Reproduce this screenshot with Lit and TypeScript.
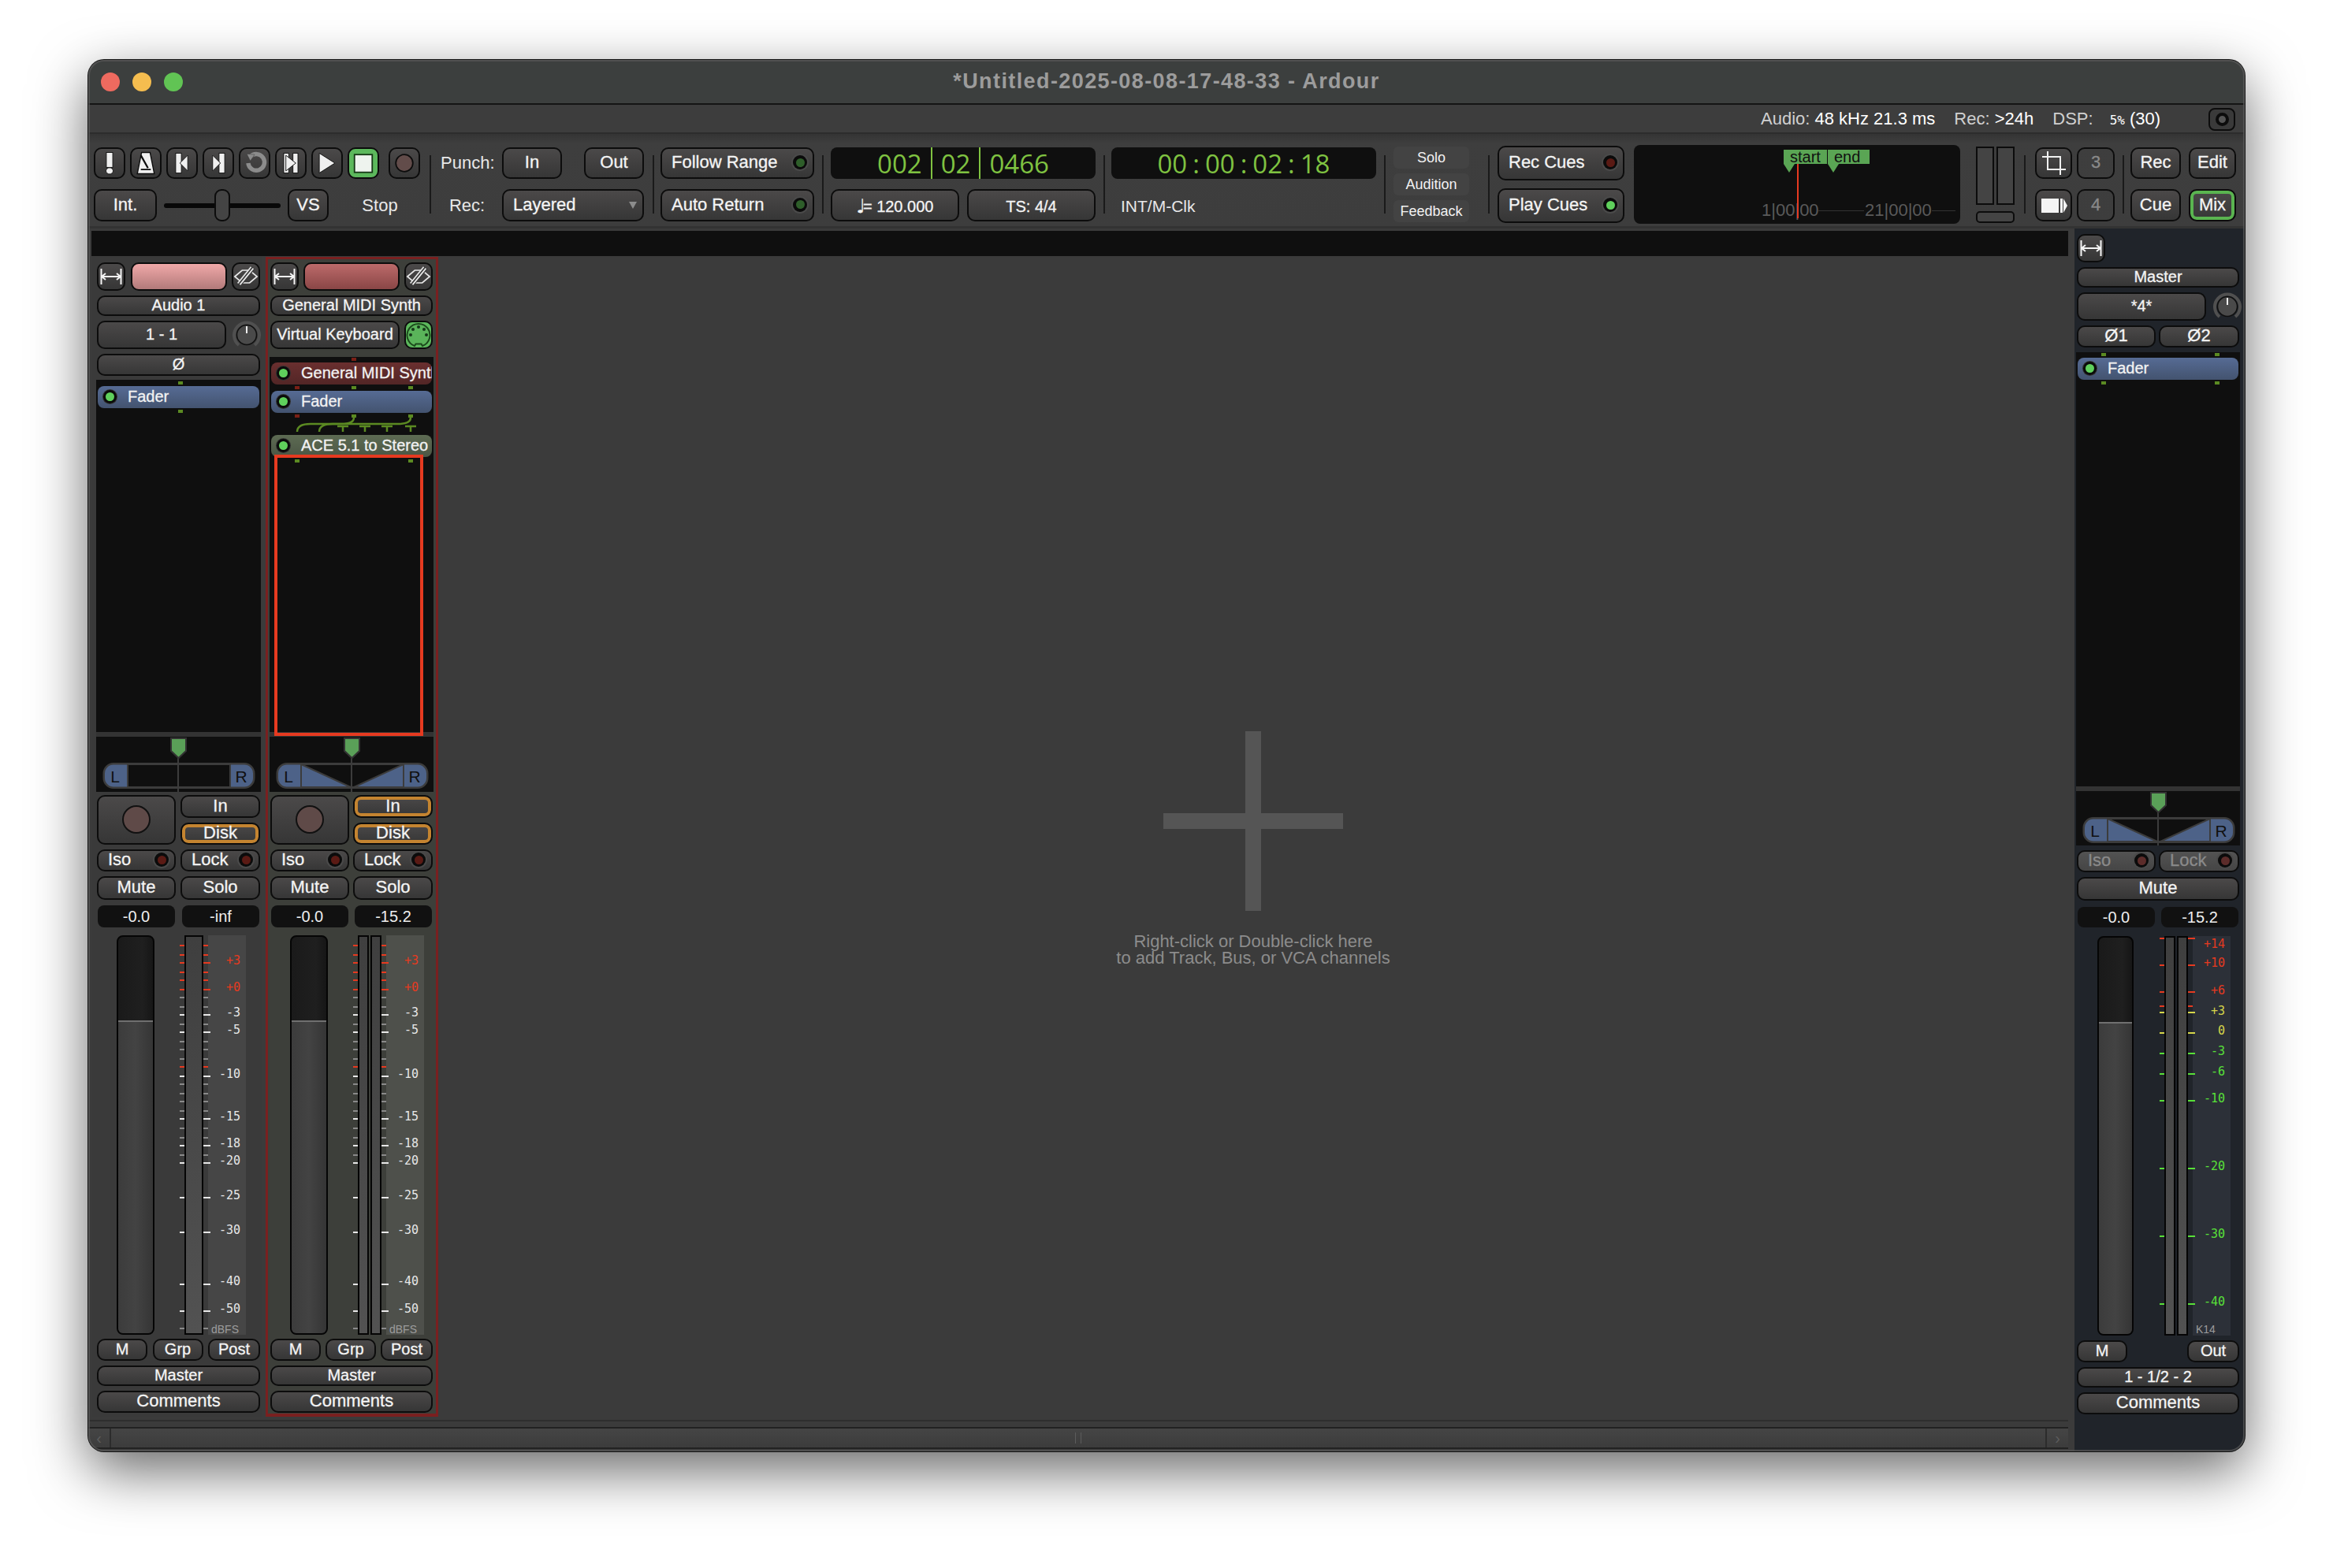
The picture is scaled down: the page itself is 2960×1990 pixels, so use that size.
import { LitElement, html, css, svg } from "lit";
import { customElement } from "lit/decorators.js";

type Tick = [number, "s" | "l", string];
type Mark = [number, string, string];

const RED = "#e63a20";
const GRY = "#8a8a8a";
const WHT = "#e8e8e8";
const YEL = "#d6d64a";
const GRN = "#58e038";

// y values below are offsets from the top of the meter
const dbTicks: Tick[] = (
  [
    [1199, "s", RED], [1211, "s", RED], [1221, "l", RED], [1233, "s", RED], [1243, "s", RED], [1255, "l", RED],
    [1265, "s", GRY], [1277, "s", GRY], [1287, "l", WHT], [1299, "s", GRY], [1309, "l", WHT], [1321, "s", GRY],
    [1331, "s", GRY], [1343, "s", GRY], [1353, "s", RED], [1365, "l", WHT], [1375, "s", GRY], [1387, "s", GRY],
    [1397, "s", GRY], [1409, "s", GRY], [1419, "l", WHT], [1431, "s", GRY], [1443, "s", GRY], [1453, "l", WHT],
    [1465, "s", GRY], [1475, "l", WHT], [1519, "l", WHT], [1563, "l", WHT], [1629, "l", WHT], [1663, "l", WHT],
    [1685, "s", GRY],
  ] as Tick[]
).map(([y, k, c]) => [y - 1186, k, c] as Tick);

const dbMarks: Mark[] = (
  [
    [1218, "+3", RED], [1252, "+0", RED], [1284, "-3", WHT], [1306, "-5", WHT], [1362, "-10", WHT], [1416, "-15", WHT],
    [1450, "-18", WHT], [1472, "-20", WHT], [1516, "-25", WHT], [1560, "-30", WHT], [1625, "-40", WHT], [1660, "-50", WHT],
  ] as Mark[]
).map(([y, t, c]) => [y - 1186, t, c] as Mark);

const kTicks: Tick[] = (
  [
    [1191, "l", RED], [1225, "l", RED], [1259, "l", RED], [1277, "s", RED], [1285, "l", YEL], [1311, "l", YEL],
    [1337, "l", GRN], [1363, "l", GRN], [1397, "l", GRN], [1483, "l", GRN], [1569, "l", GRN], [1655, "l", GRN],
  ] as Tick[]
).map(([y, k, c]) => [y - 1188, k, c] as Tick);

const kMarks: Mark[] = (
  [
    [1198, "+14", RED], [1222, "+10", RED], [1257, "+6", RED], [1283, "+3", YEL], [1308, "0", YEL], [1334, "-3", GRN],
    [1360, "-6", GRN], [1394, "-10", GRN], [1480, "-20", GRN], [1566, "-30", GRN], [1652, "-40", GRN],
  ] as Mark[]
).map(([y, t, c]) => [y - 1188, t, c] as Mark);

const widthIcon = html`<svg width="32" height="32" viewBox="0 0 32 32" fill="none" stroke="#f4f4f4" stroke-width="2">
  <path d="M3.500 6v20M28.500 6v20M4 16h24M9 12l-5 4 5 4M23 12l5 4-5 4" />
</svg>`;

const eyeIcon = html`<svg width="34" height="34" viewBox="0 0 34 34" fill="none" stroke="#e8e8e8" stroke-width="1.800">
  <path d="M2 17l10-8.500h10l10 8.500-10 8.500H12z" />
  <path d="M7 29L27 5" stroke="#3a3a3a" stroke-width="6" />
  <path d="M9 28L27 6M6 26L24 4" />
</svg>`;

const midiIcon = html`<svg width="32" height="32" viewBox="0 0 32 32">
  <path d="M11 30a14.500 14.500 0 1 1 10 0l-1.500-2.500h-7z" fill="#5ab45a" stroke="#1c4a1c" stroke-width="2" />
  <g fill="#17381a">
    <circle cx="16" cy="6" r="2" /><circle cx="9" cy="9" r="2" /><circle cx="23" cy="9" r="2" />
    <circle cx="6" cy="16" r="2" /><circle cx="26" cy="16" r="2" />
  </g>
</svg>`;

const knob = html`<svg width="36" height="36" viewBox="0 0 36 36">
  <path d="M8 31a16 16 0 1 1 20 0" fill="none" stroke="#505050" stroke-width="4" />
  <circle cx="18" cy="18" r="12.500" fill="#4a4a4a" stroke="#0f0f0f" stroke-width="1.500" />
  <path d="M18 7v9" stroke="#eee" stroke-width="2" />
</svg>`;

const T = { f: "#f0f0f0", s: "#0c0c0c" };
const tIcons = {
  panic: svg`<rect x="15.500" y="5" width="9" height="21" fill=${T.f} stroke=${T.s} /><ellipse cx="20" cy="31" rx="5" ry="4.500" fill=${T.f} stroke=${T.s} />`,
  metro: svg`<path d="M14 5h12l6 30H8z" fill=${T.f} stroke=${T.s} stroke-width="1.500" /><path d="M13 29h14" stroke=${T.s} stroke-width="2" /><path d="M13 9l10 18" stroke=${T.s} stroke-width="2.500" />`,
  start: svg`<rect x="11" y="6" width="8" height="28" fill=${T.f} stroke=${T.s} /><path d="M28 9L17 20l11 11z" fill=${T.f} stroke=${T.s} />`,
  end: svg`<rect x="21" y="6" width="8" height="28" fill=${T.f} stroke=${T.s} /><path d="M12 9l11 11-11 11z" fill=${T.f} stroke=${T.s} />`,
  loop: svg`<path d="M14 11a11.500 11.500 0 1 1-3 9" fill="none" stroke="#8c8c8c" stroke-width="6" /><path d="M9 7l11 1-6 9z" fill="#8c8c8c" stroke="#333" stroke-width=".5" />`,
  range: svg`<rect x="10" y="6" width="7" height="28" fill=${T.f} stroke=${T.s} /><rect x="23" y="6" width="7" height="28" fill=${T.f} stroke=${T.s} /><path d="M13 9l14 11-14 11z" fill=${T.f} stroke=${T.s} />`,
  play: svg`<path d="M9 6l22 14L9 34z" fill=${T.f} stroke=${T.s} />`,
  stop: svg`<rect x="7.500" y="8" width="25" height="25" fill="#eef3ee" stroke="#163816" stroke-width="2" />`,
  rec: svg`<circle cx="20" cy="20" r="12" fill="#624c4a" stroke=${T.s} stroke-width="2" />`,
};
const tIcon = (name: keyof typeof tIcons) =>
  html`<svg width="36" height="36" viewBox="0 0 40 40">${tIcons[name]}</svg>`;

const cropIcon = html`<svg width="34" height="34" viewBox="0 0 34 34" fill="none" stroke="#f0f0f0" stroke-width="2">
  <path d="M9 2v23h23M2 9h23v23" />
</svg>`;
const cueIcon = html`<svg width="36" height="24" viewBox="0 0 36 24">
  <rect x="2" y="3" width="22" height="18" fill="#f4f4f4" /><rect x="26" y="3" width="3" height="18" fill="#f4f4f4" />
  <path d="M30 3l5 9-5 9z" fill="#f4f4f4" />
</svg>`;

const led = (cls: string) => html`<span class="led"><i class=${cls}></i></span>`;

@customElement("app-root")
export class AppRoot extends LitElement {
  static styles = css`
    :host {
      display: block;
      width: 2960px;
      height: 1990px;
      background: #fff;
      font-family: "Liberation Sans", Arial, sans-serif;
      color: #f2f2f2;
      overflow: hidden;
    }
    * {
      box-sizing: border-box;
    }
    svg {
      display: block;
    }
    .page {
      padding: 76px 0 0 112px;
    }
    .window {
      position: relative;
      width: 2736px;
      height: 1766px;
      border-radius: 20px;
      background: #3c3c3c;
      overflow: hidden;
      box-shadow: 0 24px 70px rgba(0, 0, 0, 0.6), 0 0 0 1px #1d1d1d;
    }
    .window::after {
      content: "";
      position: absolute;
      inset: 0;
      border: 2px solid #5a5a5a;
      border-radius: 20px;
      pointer-events: none;
      opacity: 0.7;
    }

    /* title + info */
    .titlebar {
      height: 57px;
      background: #3c3f3e;
      border-bottom: 2px solid #141414;
      display: flex;
      align-items: center;
      justify-content: center;
      position: relative;
    }
    .title {
      font-size: 27px;
      font-weight: 700;
      letter-spacing: 1.4px;
      color: #9c9c9c;
    }
    .lights {
      position: absolute;
      left: 16px;
      top: 16px;
      display: flex;
      gap: 16px;
    }
    .lights i {
      width: 24px;
      height: 24px;
      border-radius: 50%;
    }
    .infobar {
      height: 37px;
      background: #3d3d3d;
      border-bottom: 2px solid #2c2c2c;
      display: flex;
      align-items: center;
      font-size: 22px;
      color: #d0d0d0;
      padding-left: 2122px;
    }
    .infobar b {
      font-weight: 400;
      color: #fff;
    }
    .info-rec {
      margin-left: 24px;
    }
    .info-dsp {
      margin-left: 24px;
    }
    .info-val {
      margin-left: 21px;
      color: #fff;
    }
    .info-val small {
      font-family: "DejaVu Sans Mono", monospace;
      font-size: 16px;
    }
    .info-btn {
      position: absolute;
      left: 2690px;
      top: 61px;
      width: 34px;
      height: 29px;
      border: 2px solid #0c0c0c;
      border-radius: 8px;
      background: #3a3a3a;
      display: flex;
      align-items: center;
      justify-content: center;
    }
    .info-btn i {
      width: 17px;
      height: 17px;
      border-radius: 50%;
      border: 4px solid #0c0c0c;
      background: #555;
    }

    /* toolbar */
    .toolbar {
      height: 120px;
      background: linear-gradient(#343434, #3e3e3e 12px, #3d3d3d);
      display: flex;
      align-items: flex-start;
      padding: 17px 0 0 7px;
      border-bottom: 3px solid #333;
    }
    .group {
      display: flex;
      flex-direction: column;
      gap: 13px;
      flex: none;
    }
    .row {
      display: flex;
      height: 40px;
      align-items: center;
    }
    .row.r2 {
      height: 41px;
    }
    .sep {
      width: 2px;
      height: 74px;
      margin-top: 10px;
      background: #1a1a1a;
      flex: none;
    }
    .btn {
      display: flex;
      align-items: center;
      justify-content: center;
      flex: none;
      height: 100%;
      border: 2px solid #0c0c0c;
      border-radius: 10px;
      background: linear-gradient(#4b4949, #363636);
      color: #f4f4f4;
      font-size: 22px;
      line-height: 1;
      white-space: nowrap;
      padding-bottom: 2px;
      -webkit-text-stroke: 0.3px currentColor;
    }
    .btn.small {
      font-size: 20px;
    }
    .btn.left {
      justify-content: space-between;
      padding: 0 7px 2px 12px;
    }
    .btn.low {
      padding: 3px 0 0;
    }
    .btn.ring-o {
      box-shadow: inset 0 0 0 4px #c48430;
    }
    .btn.ring-g {
      box-shadow: inset 0 0 0 4px #5ab450;
    }
    .btn.go {
      background: #5cb85c;
    }
    .btn.dim {
      color: #8a8a8a;
      background: linear-gradient(#535353, #454545);
    }
    .tbtn {
      width: 40px;
      margin-right: 6px;
      padding: 0;
    }
    .tbtn.last {
      margin: 0 0 0 6px;
    }
    .led {
      flex: none;
      width: 18px;
      height: 18px;
      border-radius: 50%;
      background: #0b0b0b;
      box-shadow: 0 0 0 2px #4a4a4a;
      display: flex;
      align-items: center;
      justify-content: center;
    }
    .led i {
      width: 11px;
      height: 11px;
      border-radius: 50%;
    }
    .led .on {
      background: #5fd05c;
    }
    .led .dimg {
      background: #2e5e2a;
    }
    .led .off {
      background: #5a1a14;
    }
    .led .off2 {
      background: #5c2c2a;
    }
    .slider {
      position: relative;
      width: 148px;
      height: 41px;
      margin: 0 9px;
      display: flex;
      align-items: center;
    }
    .slider .track {
      width: 100%;
      height: 6px;
      background: #080808;
      border-radius: 3px;
    }
    .slider .thumb {
      position: absolute;
      left: 64px;
      top: 0;
      width: 20px;
      height: 41px;
      border: 2px solid #0c0c0c;
      border-radius: 9px;
      background: #444;
    }
    .plain {
      font-size: 22px;
      color: #e8e8e8;
      text-align: center;
      flex: none;
    }
    .clock {
      width: 336px;
      height: 40px;
      border-radius: 8px;
      background: #0f0f0f;
      color: #7fc241;
      font-family: "Open Sans", sans-serif;
      font-size: 33px;
      display: flex;
      align-items: center;
      justify-content: center;
      line-height: 1;
    }
    .clock .bar {
      width: 2px;
      height: 40px;
      background: #7fc241;
      margin: 0 11px;
    }
    .clock .colon {
      margin: 0 7px;
    }
    .note {
      font-family: "DejaVu Sans", sans-serif;
      font-size: 24px;
      margin-right: -3px;
    }
    .flat {
      width: 96px;
      height: 28px;
      margin-bottom: 6px;
      border-radius: 6px;
      background: #434343;
      font-size: 18px;
      display: flex;
      align-items: center;
      justify-content: center;
    }
    .timeline {
      position: relative;
      width: 414px;
      height: 100px;
      margin: -3px 0 0 12px;
      border-radius: 8px;
      background: #0f0f0f;
      flex: none;
      overflow: hidden;
    }
    .timeline span {
      position: absolute;
    }
    .flag {
      top: 6px;
      height: 18px;
      background: #5aa554;
      color: #101010;
      font-size: 20px;
      line-height: 18px;
      padding-left: 8px;
    }
    .pole {
      top: 24px;
      width: 0;
      height: 0;
      border-left: 7px solid transparent;
      border-right: 7px solid transparent;
      border-top: 11px solid #5aa554;
    }
    .playhead {
      left: 207px;
      top: 24px;
      width: 2px;
      height: 69px;
      background: #e63a20;
    }
    .tl-text {
      top: 71px;
      color: #5a5a5a;
      font-size: 22px;
      line-height: 24px;
    }
    .tl-line {
      top: 83px;
      height: 1px;
      background: #333;
    }
    .meters {
      width: 49px;
      margin: -1px 0 0 20px;
      flex: none;
    }
    .mtr-row {
      display: flex;
      justify-content: space-between;
    }
    .mtr-row i {
      width: 23px;
      height: 74px;
      border: 2px solid #0c0c0c;
      background: #444;
    }
    .mtr-btn {
      height: 15px;
      margin-top: 8px;
      border: 2px solid #0c0c0c;
      border-radius: 5px;
      background: #444;
    }

    /* body */
    .body {
      display: flex;
      height: 1552px;
    }
    .main {
      width: 2520px;
      flex: none;
      background: #3b3b3b;
    }
    .blackbar {
      height: 32px;
      margin: 3px 8px 1px 4px;
      background: #0f0f0f;
    }
    .mixer {
      height: 1472px;
      display: flex;
      padding-left: 5px;
    }
    .empty {
      width: 2068px;
      flex: none;
      display: flex;
      flex-direction: column;
      align-items: center;
      padding-top: 602px;
      color: #8c8c8c;
      font-size: 22px;
      line-height: 21px;
      text-align: center;
    }
    .empty svg {
      margin-bottom: 28px;
    }
    .footer {
      height: 44px;
      padding-top: 13px;
      position: relative;
    }
    .footer::before {
      content: "";
      position: absolute;
      left: 0;
      right: 8px;
      top: 4px;
      height: 2px;
      background: #2e2e2e;
    }
    .scroll {
      height: 28px;
      margin-right: 8px;
      border-top: 2px solid #222;
      border-bottom: 2px solid #222;
      background: linear-gradient(#454545, #3c3c3c);
      display: flex;
      justify-content: space-between;
      align-items: center;
      color: #5c5c5c;
      font-size: 20px;
    }
    .scroll span {
      width: 29px;
      height: 100%;
      display: flex;
      align-items: center;
      justify-content: center;
    }
    .scroll span:first-child {
      border-right: 2px solid #2c2c2c;
    }
    .scroll span:last-child {
      border-left: 2px solid #2c2c2c;
    }
    .grip {
      width: 8px;
      height: 14px;
      border-left: 1px solid #5c5c5c;
      border-right: 1px solid #5c5c5c;
    }

    /* strips */
    .strip {
      width: 215px;
      flex: none;
      height: 100%;
      padding: 7px 2px 5px 6px;
      background: #3a3a3a;
      display: flex;
      flex-direction: column;
      font-size: 20px;
    }
    .strip.sel {
      width: 219px;
      margin-left: 5px;
      padding: 4px 4px 1px 3px;
      background: #3d3f3a;
      border: 3px solid #7a2020;
      border-bottom-width: 4px;
    }
    .strip.master {
      width: 216px;
      height: 1552px;
      background: #20242a;
      padding: 7px 7px 47px 3px;
    }
    .line {
      display: flex;
      justify-content: space-between;
      flex: none;
    }
    .h36 {
      height: 36px;
    }
    .h26 {
      height: 26px;
    }
    .h28 {
      height: 28px;
    }
    .h30 {
      height: 30px;
    }
    .rbtn {
      width: 36px;
      padding: 0;
    }
    .colour {
      width: 122px;
      height: 36px;
      border: 2px solid #0c0c0c;
      border-radius: 10px;
    }
    .colour.pink {
      background: linear-gradient(#f0a8a8, #b27a7a);
    }
    .colour.red {
      background: linear-gradient(#bc6a6a, #8a4646);
    }
    .box {
      flex: 1;
      min-height: 0;
      margin-left: -1px;
      margin-right: -1px;
      background: #0f0f0f;
      display: flex;
      flex-direction: column;
      position: relative;
    }
    .pips {
      position: relative;
      height: 4px;
      flex: none;
    }
    .pips i {
      position: absolute;
      top: 0;
      width: 6px;
      height: 4px;
      background: #5b8a22;
    }
    .pips i.r {
      background: #7a1f16;
    }
    .proc {
      height: 28px;
      margin: 2px;
      border-radius: 8px;
      display: flex;
      align-items: center;
      padding: 0 0 2px 7px;
      gap: 14px;
      font-size: 20px;
      color: #f2f2f2;
      white-space: nowrap;
      overflow: hidden;
      flex: none;
      -webkit-text-stroke: 0.3px currentColor;
    }
    .proc .led {
      width: 17px;
      height: 17px;
      box-shadow: 0 0 0 1px #333;
    }
    .proc.amp {
      background: linear-gradient(#566b94, #43536f);
    }
    .proc.inst {
      background: linear-gradient(#6a2f2f, #522626);
    }
    .proc.plug {
      background: linear-gradient(#5d6b53, #4b5644);
    }
    .selbox {
      position: absolute;
      left: 6px;
      top: 124px;
      width: 189px;
      bottom: -5px;
      border: 4px solid #e63a20;
      z-index: 1;
    }
    .divider {
      height: 6px;
      flex: none;
      background: #333;
      margin: 0 -1px;
    }
    .panner {
      margin: 0 -1px;
      height: 70px;
      flex: none;
      background: #0f0f0f;
      overflow: hidden;
    }
    .master .panner {
      height: 69px;
    }
    .half {
      width: 100px;
    }
    .half.r {
      width: 101px;
    }
    .stack {
      width: 101px;
      display: flex;
      flex-direction: column;
      gap: 6px;
    }
    .gain {
      width: 98px;
      height: 100%;
      border-radius: 8px;
      background: #111;
      color: #eee;
      display: flex;
      align-items: center;
      justify-content: center;
      margin: 0 1px;
    }
    .recbig {
      width: 100px;
      height: 63px;
    }
    .recbig i {
      width: 36px;
      height: 36px;
      border-radius: 50%;
      background: #5f4a48;
      border: 2px solid #111;
    }
    .fader-row {
      height: 507px;
      flex: none;
      display: flex;
      padding-left: 25px;
    }
    .gfader {
      width: 48px;
      height: 100%;
      border: 2px solid #050505;
      border-radius: 8px;
      background: linear-gradient(90deg, #1a1a1a, #1f1f1f 70%, #161616);
      overflow: hidden;
      padding-top: 106px;
      flex: none;
    }
    .gfader i {
      display: block;
      height: 100%;
      border-top: 2px solid #707070;
      background: linear-gradient(90deg, #3c3c3c, #434343 50%, #353535);
    }
    .meter {
      display: flex;
      height: 100%;
      margin-left: 32px;
      flex: none;
    }
    .ticks {
      width: 6px;
      position: relative;
      flex: none;
    }
    .ticks i {
      position: absolute;
      left: 0;
      height: 2px;
      width: 6px;
      z-index: 1;
    }
    .ticks.rt i.l {
      width: 9px;
    }
    .mbar {
      height: 100%;
      border: 2px solid #050505;
      background: linear-gradient(#3f3f3f, #525252);
      flex: none;
    }
    .mbar.one {
      width: 24px;
    }
    .mbar.two {
      width: 14px;
    }
    .mbar.two + .mbar.two {
      margin-left: 2px;
    }
    .scale {
      width: 48px;
      position: relative;
      background: #464646;
      flex: none;
    }
    .sel .scale {
      background: #4e504b;
    }
    .master .scale {
      background: #2c3038;
    }
    .scale span {
      position: absolute;
      right: 7px;
      transform: translateY(-50%);
      font-family: "DejaVu Sans Mono", monospace;
      font-size: 15px;
      line-height: 1;
    }
    .scale .unit {
      left: 4px;
      right: auto;
      font-family: "Liberation Sans", sans-serif;
      font-size: 14px;
      color: #9c9c9c;
    }
    .master .meter {
      margin-left: 33px;
    }
    .master .fader-row {
      padding-left: 26px;
    }
    .master .gfader {
      width: 46px;
      padding-top: 107px;
    }
    .mt4 {
      margin-top: 4px;
    }
    .mt5 {
      margin-top: 5px;
    }
    .mt6 {
      margin-top: 6px;
    }
    .mt7 {
      margin-top: 7px;
    }
    .mt10 {
      margin-top: 10px;
    }
  `;

  private ticks(list: Tick[], right: boolean) {
    return html`<div class="ticks ${right ? "rt" : ""}">
      ${list.map(([y, k, c]) => html`<i class=${k} style="top:${y - 1}px;background:${c}"></i>`)}
    </div>`;
  }

  private meter(ticks: Tick[], marks: Mark[], bars: number, unit: string, unitTop: number) {
    const cls = bars === 1 ? "one" : "two";
    return html`<div class="meter">
      ${this.ticks(ticks, false)}
      ${Array.from({ length: bars }, () => html`<div class="mbar ${cls}"></div>`)}
      ${this.ticks(ticks, true)}
      <div class="scale">
        ${marks.map(([y, t, c]) => html`<span style="top:${y}px;color:${c}">${t}</span>`)}
        <span class="unit" style="top:${unitTop}px">${unit}</span>
      </div>
    </div>`;
  }

  private panner(wedges: boolean) {
    return html`<div class="panner">
      <svg width="208" height="70" viewBox="0 0 208 70">
        <rect x="10" y="34.500" width="190" height="30" rx="12" fill="#0f0f0f" stroke="#3c3c3c" stroke-width="3" />
        <path d="M11 46.500a11 11 0 0 1 11-11h18v28H22a11 11 0 0 1-11-11zM170 35.500h18a11 11 0 0 1 11 11v6a11 11 0 0 1-11 11h-18z" fill="#4d6288" />
        ${wedges
          ? svg`<path d="M40 35l63 29H40zM170 35l-63 29h63z" fill="#4d6288" stroke="#3c3c3c" stroke-width="2" />`
          : svg`<path d="M40 34v31M170 34v31" stroke="#3c3c3c" stroke-width="2" />`}
        <path d="M104 26v44" stroke="#3c3c3c" stroke-width="2" />
        <path d="M95 2h19v16l-9.500 9-9.500-9z" fill="#5aa058" stroke="#333" stroke-width="2" />
        <text x="24" y="58" text-anchor="middle" font-size="21" fill="#101010">L</text>
        <text x="184" y="58" text-anchor="middle" font-size="21" fill="#101010">R</text>
      </svg>
    </div>`;
  }

  private pips(list: [number, string?][], mt = 0) {
    return html`<div class="pips" style="margin-top:${mt}px">
      ${list.map(([x, c]) => html`<i class=${c ?? ""} style="left:${x - 3}px"></i>`)}
    </div>`;
  }

  private proc(cls: string, name: string) {
    return html`<div class="proc ${cls}">${led("on")}<span>${name}</span></div>`;
  }

  private stripFoot(second: string, post: string) {
    return html`
      <div class="line h28 mt5">
        <div class="btn small" style="width:64px">M</div>
        <div class="btn small" style="width:64px">Grp</div>
        <div class="btn small" style="width:66px">${post}</div>
      </div>
      <div class="line h26 mt6"><div class="btn small" style="width:100%">${second}</div></div>
      <div class="line h28 mt6"><div class="btn" style="width:100%">Comments</div></div>
    `;
  }

  private stripControls(first: string, inRing: boolean) {
    return html`
      <div class="line mt4" style="height:63px">
        <div class="btn recbig"><i></i></div>
        <div class="stack">
          <div class="btn ${inRing ? "ring-o" : ""}" style="height:29px;width:100%">In</div>
          <div class="btn ring-o" style="height:28px;width:100%">Disk</div>
        </div>
      </div>
      <div class="line h28 mt6">
        <div class="btn left half">Iso${led("off")}</div>
        <div class="btn left half r">Lock${led("off")}</div>
      </div>
      <div class="line h30 mt6">
        <div class="btn half">Mute</div>
        <div class="btn half r">Solo</div>
      </div>
      <div class="line h28 mt7">
        <div class="gain">-0.0</div>
        <div class="gain">${first}</div>
      </div>
    `;
  }

  private audioStrip() {
    return html`<div class="strip">
      <div class="line h36">
        <div class="btn rbtn">${widthIcon}</div>
        <div class="colour pink"></div>
        <div class="btn rbtn">${eyeIcon}</div>
      </div>
      <div class="line h26 mt6"><div class="btn small" style="width:100%">Audio 1</div></div>
      <div class="line h36 mt6">
        <div class="btn small" style="width:164px">1 - 1</div>
        <div style="margin:0 -1px 0 0">${knob}</div>
      </div>
      <div class="line h28 mt6"><div class="btn small" style="width:100%">Ø</div></div>
      <div class="box mt5">
        ${this.pips([[107]], 2)}
        ${this.proc("amp", "Fader")}
        ${this.pips([[107]])}
      </div>
      <div class="divider"></div>
      ${this.panner(false)}
      ${this.stripControls("-inf", false)}
      <div class="fader-row mt10">
        <div class="gfader"><i></i></div>
        ${this.meter(dbTicks, dbMarks, 1, "dBFS", 500)}
      </div>
      ${this.stripFoot("Master", "Post")}
    </div>`;
  }

  private midiStrip() {
    return html`<div class="strip sel">
      <div class="line h36">
        <div class="btn rbtn">${widthIcon}</div>
        <div class="colour red"></div>
        <div class="btn rbtn">${eyeIcon}</div>
      </div>
      <div class="line h26 mt6"><div class="btn small" style="width:100%">General MIDI Synth</div></div>
      <div class="line h36 mt6">
        <div class="btn small" style="width:164px">Virtual Keyboard</div>
        <div class="btn rbtn go">${midiIcon}</div>
      </div>
      <div class="box mt10">
        ${this.pips([[107, "r"]], 1)}
        ${this.proc("inst", "General MIDI Synth")}
        ${this.pips([[35, "r"], [107], [179]])}
        ${this.proc("amp", "Fader")}
        ${this.pips([[35, "r"], [107], [179]])}
        <svg width="208" height="20" viewBox="0 0 208 20" fill="none" stroke="#5b8a22" stroke-width="2.500" style="flex:none">
          <path d="M107 0c0 6-8 8-16 8H52C42 8 35 10 35 18" />
          <path d="M179 0c0 6-8 8-16 8H80C70 8 63 10 63 18" />
          <path d="M86 11h14M93 11v7M114 11h14M121 11v7M142 11h14M149 11v7M172 11h14M179 11v7" />
        </svg>
        ${this.proc("plug", "ACE 5.1 to Stereo")}
        ${this.pips([[35], [179]], 1)}
        <div class="selbox"></div>
      </div>
      <div class="divider"></div>
      ${this.panner(true)}
      ${this.stripControls("-15.2", true)}
      <div class="fader-row mt10">
        <div class="gfader"><i></i></div>
        ${this.meter(dbTicks, dbMarks, 2, "dBFS", 500)}
      </div>
      ${this.stripFoot("Master", "Post")}
    </div>`;
  }

  private masterStrip() {
    return html`<div class="strip master">
      <div class="line h36"><div class="btn rbtn">${widthIcon}</div></div>
      <div class="line h26 mt6"><div class="btn small" style="width:100%">Master</div></div>
      <div class="line h36 mt6">
        <div class="btn small" style="width:164px">*4*</div>
        <div style="margin-right:-3px">${knob}</div>
      </div>
      <div class="line h28 mt6">
        <div class="btn" style="width:100px">Ø1</div>
        <div class="btn" style="width:102px">Ø2</div>
      </div>
      <div class="box mt6">
        ${this.pips([[35], [179]], 1)}
        ${this.proc("amp", "Fader")}
        ${this.pips([[35], [179]])}
      </div>
      <div class="divider"></div>
      ${this.panner(true)}
      <div class="line h28 mt6">
        <div class="btn left half dim">Iso${led("off2")}</div>
        <div class="btn left half r dim" style="width:102px">Lock${led("off2")}</div>
      </div>
      <div class="line h30 mt6"><div class="btn" style="width:100%">Mute</div></div>
      <div class="line" style="height:26px;margin-top:8px">
        <div class="gain">-0.0</div>
        <div class="gain">-15.2</div>
      </div>
      <div class="fader-row" style="margin-top:11px">
        <div class="gfader"><i></i></div>
        ${this.meter(kTicks, kMarks, 2, "K14", 499)}
      </div>
      <div class="line h28 mt6">
        <div class="btn small" style="width:64px">M</div>
        <div class="btn small" style="width:66px">Out</div>
      </div>
      <div class="line h26 mt6"><div class="btn small" style="width:100%">1 - 1/2 - 2</div></div>
      <div class="line h28 mt6"><div class="btn" style="width:100%">Comments</div></div>
    </div>`;
  }

  private toolbar() {
    return html`<div class="toolbar">
      <div class="group" style="width:414px">
        <div class="row">
          <div class="btn tbtn">${tIcon("panic")}</div>
          <div class="btn tbtn">${tIcon("metro")}</div>
          <div class="btn tbtn">${tIcon("start")}</div>
          <div class="btn tbtn">${tIcon("end")}</div>
          <div class="btn tbtn">${tIcon("loop")}</div>
          <div class="btn tbtn">${tIcon("range")}</div>
          <div class="btn tbtn">${tIcon("play")}</div>
          <div class="btn tbtn go">${tIcon("stop")}</div>
          <div class="btn tbtn last">${tIcon("rec")}</div>
        </div>
        <div class="row r2">
          <div class="btn" style="width:80px">Int.</div>
          <div class="slider"><div class="track"></div><div class="thumb"></div></div>
          <div class="btn" style="width:52px">VS</div>
          <div class="plain" style="width:48px;margin-left:41px">Stop</div>
        </div>
      </div>
      <div class="sep" style="margin-left:12px"></div>

      <div class="group" style="width:258px;margin-left:12px">
        <div class="row">
          <div class="plain" style="width:67px">Punch:</div>
          <div class="btn" style="width:76px;margin-left:11px">In</div>
          <div class="btn" style="width:76px;margin-left:28px">Out</div>
        </div>
        <div class="row r2">
          <div class="plain" style="width:67px">Rec:</div>
          <div class="btn left" style="width:180px;margin-left:11px">
            Layered
            <svg width="10" height="10" viewBox="0 0 10 10"><path d="M0 1h10L5 10z" fill="#8c8c8c" /></svg>
          </div>
        </div>
      </div>
      <div class="sep" style="margin-left:11px"></div>

      <div class="group" style="width:195px;margin-left:8px">
        <div class="row"><div class="btn left" style="width:100%">Follow Range${led("dimg")}</div></div>
        <div class="row r2"><div class="btn left" style="width:100%">Auto Return${led("dimg")}</div></div>
      </div>
      <div class="sep" style="margin-left:10px"></div>

      <div class="group" style="width:336px;margin-left:9px">
        <div class="clock">
          <span>002</span><i class="bar"></i><span>02</span><i class="bar"></i><span>0466</span>
        </div>
        <div class="row r2" style="justify-content:space-between">
          <div class="btn small low" style="width:163px"><span class="note">♩</span>= 120.000</div>
          <div class="btn small low" style="width:163px">TS: 4/4</div>
        </div>
      </div>
      <div class="sep" style="margin-left:10px"></div>

      <div class="group" style="width:336px;margin-left:8px">
        <div class="clock">
          <span>00</span><span class="colon">:</span><span>00</span><span class="colon">:</span><span>02</span
          ><span class="colon">:</span><span>18</span>
        </div>
        <div class="row r2"><div class="plain" style="margin:3px 0 0 12px;font-size:21px">INT/M-Clk</div></div>
      </div>
      <div class="sep" style="margin-left:10px"></div>

      <div style="margin:-1px 0 0 10px;width:96px;flex:none">
        <div class="flat">Solo</div>
        <div class="flat">Audition</div>
        <div class="flat">Feedback</div>
      </div>
      <div class="sep" style="margin-left:24px"></div>

      <div class="group" style="width:161px;margin:-2px 0 0 10px;gap:10px">
        <div class="row" style="height:44px"><div class="btn left" style="width:100%">Rec Cues${led("off")}</div></div>
        <div class="row" style="height:44px"><div class="btn left" style="width:100%">Play Cues${led("on")}</div></div>
      </div>

      <div class="timeline">
        <span class="flag" style="left:190px;width:55px">start</span>
        <span class="flag" style="left:246px;width:53px">end</span>
        <span class="pole" style="left:190px"></span>
        <span class="pole" style="left:246px"></span>
        <span class="tl-text" style="left:162px">1|00|00</span>
        <span class="tl-text" style="left:293px">21|00|00</span>
        <span class="tl-line" style="left:234px;width:58px"></span>
        <span class="tl-line" style="left:378px;width:30px"></span>
        <span class="playhead"></span>
      </div>

      <div class="meters">
        <div class="mtr-row"><i></i><i></i></div>
        <div class="mtr-btn"></div>
      </div>
      <div class="sep" style="margin-left:12px"></div>

      <div class="group" style="width:101px;margin-left:12px">
        <div class="row" style="justify-content:space-between">
          <div class="btn rbtn" style="width:47px">${cropIcon}</div>
          <div class="btn dim" style="width:48px;background:none">3</div>
        </div>
        <div class="row r2" style="justify-content:space-between">
          <div class="btn rbtn" style="width:47px">${cueIcon}</div>
          <div class="btn dim" style="width:48px;background:none">4</div>
        </div>
      </div>
      <div class="sep" style="margin-left:10px"></div>

      <div class="group" style="width:134px;margin-left:8px">
        <div class="row" style="justify-content:space-between">
          <div class="btn" style="width:64px">Rec</div>
          <div class="btn" style="width:60px">Edit</div>
        </div>
        <div class="row r2" style="justify-content:space-between">
          <div class="btn" style="width:64px">Cue</div>
          <div class="btn ring-g" style="width:60px">Mix</div>
        </div>
      </div>
    </div>`;
  }

  render() {
    return html`<div class="page">
      <div class="window">
        <div class="titlebar">
          <div class="lights">
            <i style="background:#ee6a5f"></i><i style="background:#f5bd4f"></i><i style="background:#61c454"></i>
          </div>
          <span class="title">*Untitled-2025-08-08-17-48-33 - Ardour</span>
        </div>
        <div class="infobar">
          <span>Audio: <b>48 kHz 21.3 ms</b></span>
          <span class="info-rec">Rec: <b>&gt;24h</b></span>
          <span class="info-dsp">DSP:</span>
          <span class="info-val"><small>5%</small> (30)</span>
          <div class="info-btn"><i></i></div>
        </div>
        ${this.toolbar()}
        <div class="body">
          <div class="main">
            <div class="blackbar"></div>
            <div class="mixer">
              ${this.audioStrip()} ${this.midiStrip()}
              <div class="empty">
                <svg width="228" height="228" viewBox="0 0 228 228" fill="#555">
                  <rect x="104" width="20" height="228" /><rect y="104" width="228" height="20" />
                </svg>
                <div>Right-click or Double-click here<br />to add Track, Bus, or VCA channels</div>
              </div>
            </div>
            <div class="footer">
              <div class="scroll"><span>‹</span><i class="grip"></i><span>›</span></div>
            </div>
          </div>
          ${this.masterStrip()}
        </div>
      </div>
    </div>`;
  }
}
